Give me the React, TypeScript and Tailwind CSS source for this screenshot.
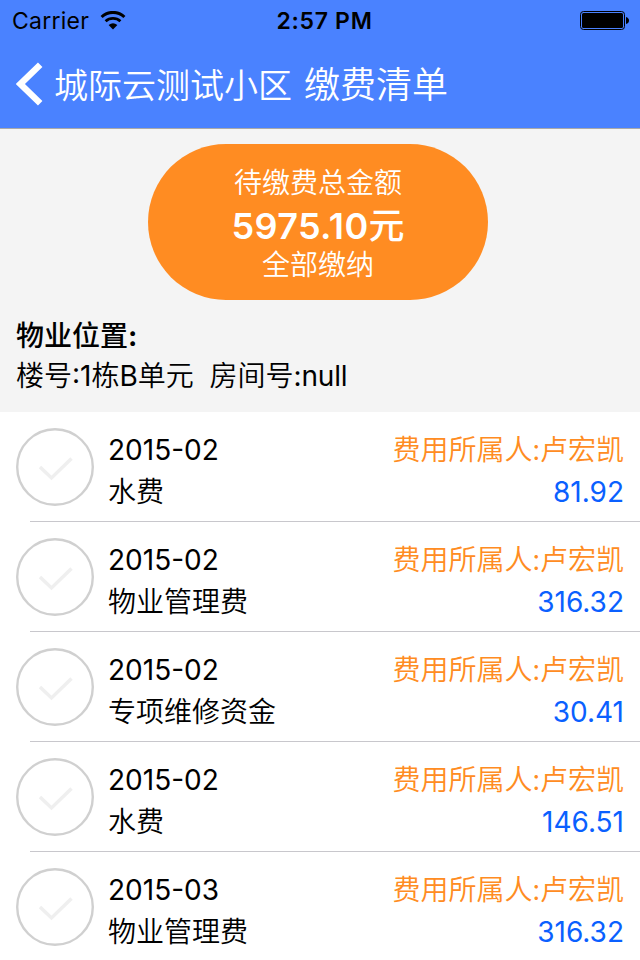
import React from "react";

const latin = "font-['Inter','Noto_Sans_CJK_SC',sans-serif]";
const cjk = "font-['Noto_Sans_CJK_SC',sans-serif] font-[350]";

type Bill = { date: string; name: string; amount: string };

const bills: Bill[] = [
  { date: "2015-02", name: "水费", amount: "81.92" },
  { date: "2015-02", name: "物业管理费", amount: "316.32" },
  { date: "2015-02", name: "专项维修资金", amount: "30.41" },
  { date: "2015-02", name: "水费", amount: "146.51" },
  { date: "2015-03", name: "物业管理费", amount: "316.32" },
];

function StatusBar() {
  return (
    <div className="flex h-10 items-center justify-between pl-3 pr-[11px] text-black">
      <div className="flex w-[204px] items-center gap-[11px]">
        <span className="pt-px text-[23px] leading-10 tracking-[0.25px]">Carrier</span>
        <svg width="26" height="19" viewBox="0 0 26 19" fill="none">
          <path d="M1.6 6 A16.4 16.4 0 0 1 24.4 6" stroke="#000" strokeWidth="3" />
          <path d="M5.6 10.3 A11 11 0 0 1 20.4 10.3" stroke="#000" strokeWidth="2.8" />
          <path d="M13 18.4 L8.6 14 Q13 10.6 17.4 14 Z" fill="#000" />
        </svg>
      </div>
      <span className="whitespace-nowrap pt-px text-[23px] font-semibold leading-10 tracking-[0.7px]">2:57 PM</span>
      <div className="flex w-[196px] justify-end">
        <svg width="49" height="19" viewBox="0 0 49 19">
          <rect x="0.5" y="0.5" width="44" height="18" rx="3" fill="none" stroke="#000" />
          <rect x="2" y="2" width="41" height="15" rx="1.5" fill="#000" />
          <path d="M46 6 Q49 7 49 9.5 Q49 12 46 13 Z" fill="#000" />
        </svg>
      </div>
    </div>
  );
}

function Header() {
  return (
    <header className="h-[129px] border-b border-[#a9a9a9] bg-[#4a82ff]">
      <StatusBar />
      <div className="flex h-[88px] items-center pl-4 text-white">
        <svg width="28" height="44" viewBox="0 0 28 44" fill="none">
          <path d="M24.2 2.8 L4.4 22 L24.2 41.2" stroke="#fff" strokeWidth="6.4" />
        </svg>
        <h1 className={`mb-[3px] ml-2.5 flex items-baseline whitespace-nowrap leading-[85px] ${cjk}`}>
          <span className="text-[34px]">城际云测试小区</span>
          <span className="ml-3 text-[36px]">缴费清单</span>
        </h1>
      </div>
    </header>
  );
}

function BillRow({ bill, last }: { bill: Bill; last: boolean }) {
  return (
    <li className="flex h-[110px] flex-col">
      <div className="flex h-[109px] items-start px-4 pt-4">
        <svg className="shrink-0" width="78" height="78" viewBox="0 0 78 78" fill="none">
          <circle cx="39" cy="39" r="37.8" stroke="#d0d0d0" strokeWidth="2.4" />
          <path d="M24 39 L35.5 50 L55.5 30.5" stroke="#efefef" strokeWidth="3.4" />
        </svg>
        <div className="ml-[14px] flex flex-1 flex-col text-[28px] text-black">
          <span className="h-[41px] pt-px leading-[42px]">{bill.date}</span>
          <span className={`leading-[42px] ${cjk}`}>{bill.name}</span>
        </div>
        <div className="flex flex-col items-end text-[28px]">
          <span className={`-mt-px h-[42px] leading-[42px] text-[#ff8c22] ${cjk}`}>
            费用所属人:卢宏凯
          </span>
          <span className="pt-0.5 leading-[42px] text-[#0a60ff]">{bill.amount}</span>
        </div>
      </div>
      {!last && <div className="ml-[30px] h-px bg-[#c8c7cc]" />}
    </li>
  );
}

export default function App() {
  return (
    <div className={`h-[960px] w-[640px] overflow-hidden bg-white ${latin}`}>
      <Header />
      <section className="flex h-[283px] flex-col bg-[#f4f4f4] pt-[15px]">
        <button className="ml-[148px] flex h-[156px] w-[340px] flex-col items-center rounded-[78px] bg-[#ff8c22] pt-[17px] text-white">
          <span className={`h-10 text-[28px] leading-10 ${cjk}`}>待缴费总金额</span>
          <span className="flex h-[46px] items-baseline pt-px text-[36px] leading-[42px]">
            <span className="font-semibold tracking-[0.4px]">5975.10</span>
            <span className="font-['Noto_Sans_CJK_SC',sans-serif] font-medium">元</span>
          </span>
          <span className={`text-[28px] leading-8 ${cjk}`}>全部缴纳</span>
        </button>
        <div className="mt-[14px] px-4 text-[28px] leading-[41px] text-black">
          <p className="h-[41px] font-['Noto_Sans_CJK_SC',sans-serif] font-medium">
            物业位置<span className="font-['Inter'] font-bold">:</span>
          </p>
          <p className={`-mt-px whitespace-pre ${cjk}`}>
            楼号<span className={`${latin} font-normal`}>:1</span>栋
            <span className={`${latin} font-normal`}>B</span>单元
            <span className={latin}>{"  "}</span>房间号
            <span className={`${latin} font-normal tracking-[-0.2px]`}>:null</span>
          </p>
        </div>
      </section>
      <ul>
        {bills.map((bill, i) => (
          <BillRow key={i} bill={bill} last={i === bills.length - 1} />
        ))}
      </ul>
    </div>
  );
}
